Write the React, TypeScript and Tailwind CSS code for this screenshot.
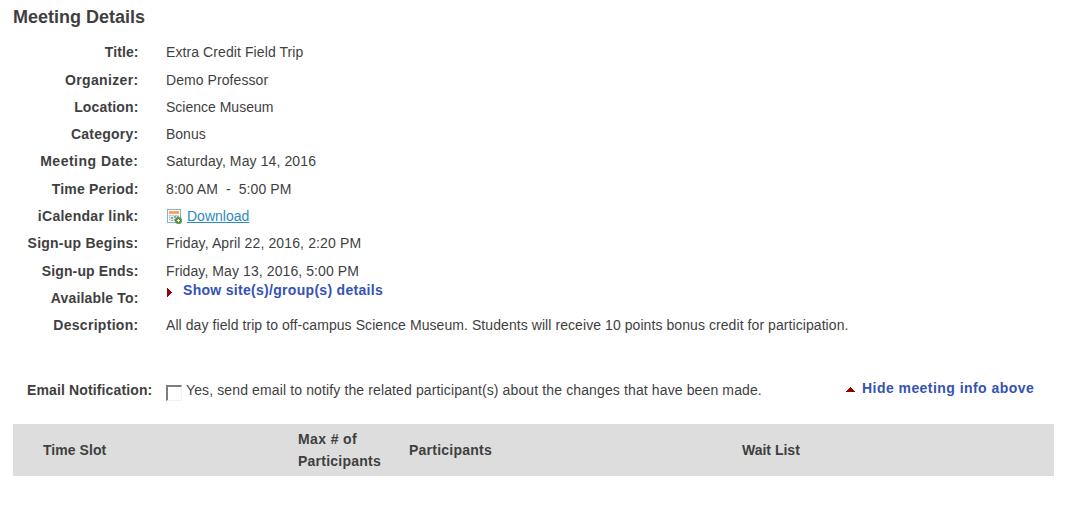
import type { ReactNode } from "react";

function CalendarIcon() {
  return (
    <svg width="16" height="16" viewBox="0 0 16 16" className="block shrink-0" shapeRendering="crispEdges">
      <rect x="0" y="0" width="14" height="14" fill="#83b3d9" />
      <rect x="1" y="1" width="12" height="12" fill="#fff" />
      <rect x="2" y="2" width="10" height="3" fill="#ffa365" />
      <path d="M2 6h10v6h-10z" fill="#dfe7ee" />
      <path d="M2 6h2v1h-2zM5 6h2v1h-2zM8 6h2v1h-2zM11 6h1v1h-1zM2 8h1v1h-1zM2 10h1v1h-1z" fill="#b4c3d2" />
      <path d="M4 8h2v2h-2zM7 7h2v2h-2zM10 7h2v2h-2zM4 11h2v1h-2zM7 10h2v2h-2z" fill="#86af8c" />
      <circle cx="11.5" cy="11.5" r="3.5" fill="#5a9347" shapeRendering="auto" />
      <path d="M11 10h1v1h1v1h-1v1h-1v-1h-1v-1h1z" fill="#fff" />
    </svg>
  );
}

type Detail = { label: string; labelClass: string; value: ReactNode; valueClass?: string };

const details: Detail[] = [
  { label: "Title:", labelClass: "tracking-[0.08px]", value: "Extra Credit Field Trip", valueClass: "tracking-[0.09px]" },
  { label: "Organizer:", labelClass: "tracking-[0.34px]", value: "Demo Professor", valueClass: "tracking-[0.07px]" },
  { label: "Location:", labelClass: "tracking-[0.15px]", value: "Science Museum" },
  { label: "Category:", labelClass: "tracking-[0.24px]", value: "Bonus" },
  { label: "Meeting Date:", labelClass: "tracking-[0.5px]", value: "Saturday, May 14, 2016", valueClass: "tracking-[0.11px]" },
  { label: "Time Period:", labelClass: "tracking-[0.19px]", value: "8:00 AM\u00a0 -\u00a0 5:00 PM", valueClass: "tracking-[0.09px]" },
  {
    label: "iCalendar link:",
    labelClass: "tracking-[0.28px]",
    value: (
      <span className="flex items-center gap-1 pl-px">
        <span className="pt-[2px]"><CalendarIcon /></span>
        <a href="#" className="text-[#2e89c1] underline">Download</a>
      </span>
    ),
  },
  { label: "Sign-up Begins:", labelClass: "tracking-[0.24px]", value: "Friday, April 22, 2016, 2:20 PM", valueClass: "tracking-[0.13px]" },
  { label: "Sign-up Ends:", labelClass: "tracking-[0.15px]", value: "Friday, May 13, 2016, 5:00 PM", valueClass: "tracking-[0.09px]" },
  {
    label: "Available To:",
    labelClass: "tracking-[0.16px]",
    value: (
      <a href="#" className="flex items-center pb-4 pl-px font-bold tracking-[0.3px] text-[#3552b5]">
        <svg width="5" height="9" viewBox="0 0 5 9" className="mt-[6px] mr-[11px]" shapeRendering="crispEdges">
          <path d="M0 0L5 4.5L0 9Z" fill="#990000" />
        </svg>
        Show site(s)/group(s) details
      </a>
    ),
  },
  {
    label: "Description:",
    labelClass: "tracking-[0.3px]",
    value: "All day field trip to off-campus Science Museum. Students will receive 10 points bonus credit for participation.",
    valueClass: "tracking-[0.072px]",
  },
];

export default function App() {
  return (
    <main className="h-[523px] w-[1065px] overflow-hidden bg-white pl-[13px] font-['Liberation_Sans',Arial,sans-serif] text-sm text-[#3f3f3f]">
      <h1 className="pt-[5px] text-lg leading-6 font-bold">Meeting Details</h1>
      <dl className="pt-[9.6px]">
        {details.map(({ label, labelClass, value, valueClass }) => (
          <div key={label} className="flex h-[27.3px] items-center whitespace-nowrap">
            <dt className={`w-[125.5px] text-right font-bold ${labelClass}`}>{label}</dt>
            <dd className={`pl-[27.5px] ${valueClass ?? ""}`}>{value}</dd>
          </div>
        ))}
      </dl>
      <div className="mt-[40.4px] flex h-[22px] items-center whitespace-nowrap">
        <span className="w-[153px] pl-[14px] font-bold tracking-[0.13px]">Email Notification:</span>
        <label className="flex w-[680px] items-center tracking-[0.125px]">
          <input
            type="checkbox"
            className="mt-[5px] mr-1 size-4 appearance-none border-t-2 border-r border-b border-l-2 border-t-[#817d7d] border-r-[#edf5f2] border-b-[#edf5f2] border-l-[#817d7d] bg-white"
          />
          Yes, send email to notify the related participant(s) about the changes that have been made.
        </label>
        <a href="#" className="flex items-center pb-1 font-bold tracking-[0.45px] text-[#3552b5]">
          <svg width="9" height="5" viewBox="0 0 9 5" className="mt-[2px] mr-[7px]" shapeRendering="crispEdges">
            <path d="M0 5L4.5 0L9 5Z" fill="#990000" />
          </svg>
          Hide meeting info above
        </a>
      </div>
      <div className="mt-[23px] grid h-[52px] w-[1041px] grid-cols-[255px_111px_333px_1fr] items-center bg-[#dddddd] pl-[30px] leading-[22px] font-bold">
        <div className="tracking-[0.06px]">Time Slot</div>
        <div><span className="tracking-[0.38px]">Max # of</span><br /><span className="tracking-[0.24px]">Participants</span></div>
        <div className="tracking-[0.24px]">Participants</div>
        <div>Wait List</div>
      </div>
    </main>
  );
}
